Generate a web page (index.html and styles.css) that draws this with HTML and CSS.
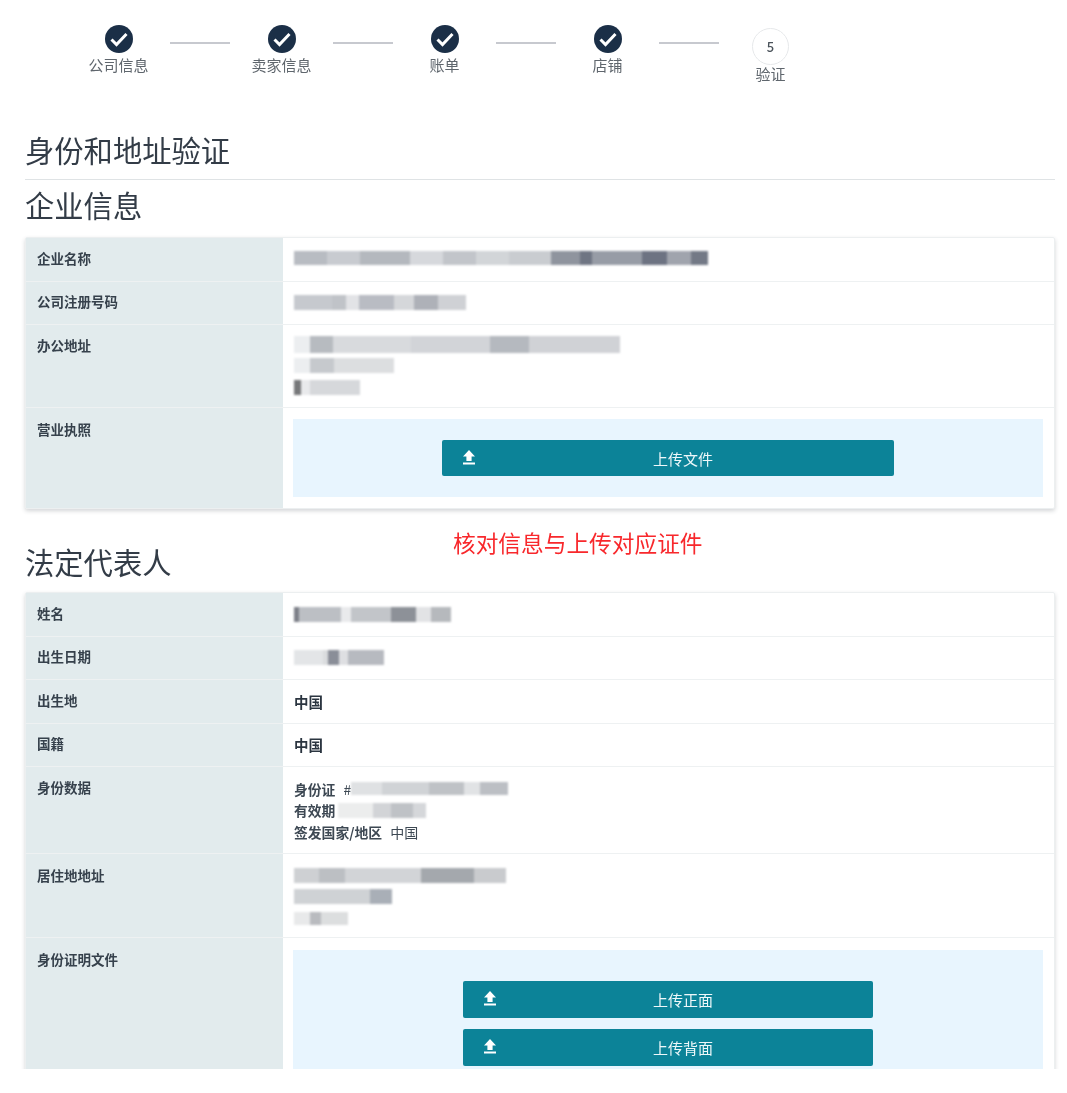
FILE: index.html
```html
<!DOCTYPE html>
<html lang="zh">
<head>
<meta charset="utf-8">
<title>身份和地址验证</title>
<link rel="stylesheet" href="styles.css">
</head>
<body>
<div class="viewport">
  <ol class="steps">
    <li class="step"><svg class="check" viewBox="0 0 28 28"><circle cx="14" cy="14" r="14" fill="#1b2f47"/><path d="M6.500 14.500l5 5 10-10.500" fill="none" stroke="#fff" stroke-width="3"/></svg><span>公司信息</span></li>
    <li class="line"></li>
    <li class="step"><svg class="check" viewBox="0 0 28 28"><circle cx="14" cy="14" r="14" fill="#1b2f47"/><path d="M6.500 14.500l5 5 10-10.500" fill="none" stroke="#fff" stroke-width="3"/></svg><span>卖家信息</span></li>
    <li class="line"></li>
    <li class="step"><svg class="check" viewBox="0 0 28 28"><circle cx="14" cy="14" r="14" fill="#1b2f47"/><path d="M6.500 14.500l5 5 10-10.500" fill="none" stroke="#fff" stroke-width="3"/></svg><span>账单</span></li>
    <li class="line"></li>
    <li class="step"><svg class="check" viewBox="0 0 28 28"><circle cx="14" cy="14" r="14" fill="#1b2f47"/><path d="M6.500 14.500l5 5 10-10.500" fill="none" stroke="#fff" stroke-width="3"/></svg><span>店铺</span></li>
    <li class="line"></li>
    <li class="step current"><b class="num">5</b><span>验证</span></li>
  </ol>

  <main class="content">
    <h1 class="title">身份和地址验证</h1>
    <h2 class="section first">企业信息</h2>
    <section class="card">
      <div class="row"><div class="label">企业名称</div><div class="value"><span class="mask r1"></span></div></div>
      <div class="row"><div class="label">公司注册号码</div><div class="value"><span class="mask r2"></span></div></div>
      <div class="row"><div class="label">办公地址</div><div class="value multi"><p><span class="mask r3"></span></p><p><span class="mask r4"></span></p><p><span class="mask r5"></span></p></div></div>
      <div class="row"><div class="label upload-label">营业执照</div><div class="value upload">
        <div class="panel single"><button class="btn wide"><svg class="up" viewBox="0 0 14 16"><path d="M7 1l6 6.500H9.600V12H4.400V7.500H1zM1 13.600h12V15.600H1z" fill="#fff"/></svg><span>上传文件</span></button></div>
      </div></div>
    </section>

    <p class="note">核对信息与上传对应证件</p>

    <h2 class="section second">法定代表人</h2>
    <section class="card clipped">
      <div class="row"><div class="label">姓名</div><div class="value"><span class="mask r6"></span></div></div>
      <div class="row"><div class="label">出生日期</div><div class="value"><span class="mask r7"></span></div></div>
      <div class="row"><div class="label">出生地</div><div class="value"><strong>中国</strong></div></div>
      <div class="row"><div class="label">国籍</div><div class="value"><strong>中国</strong></div></div>
      <div class="row"><div class="label">身份数据</div><div class="value multi identity"><p><strong>身份证</strong> # <span class="mask r8"></span></p><p><strong>有效期</strong> <span class="mask r9"></span></p><p><strong>签发国家/地区</strong> 中国</p></div></div>
      <div class="row"><div class="label lower">居住地地址</div><div class="value multi residence"><p><span class="mask r10"></span></p><p><span class="mask r11"></span></p><p><span class="mask r12"></span></p></div></div>
      <div class="row"><div class="label upload-label">身份证明文件</div><div class="value upload">
        <div class="panel double">
          <button class="btn narrow"><svg class="up" viewBox="0 0 14 16"><path d="M7 1l6 6.500H9.600V12H4.400V7.500H1zM1 13.600h12V15.600H1z" fill="#fff"/></svg><span>上传正面</span></button>
          <button class="btn narrow"><svg class="up" viewBox="0 0 14 16"><path d="M7 1l6 6.500H9.600V12H4.400V7.500H1zM1 13.600h12V15.600H1z" fill="#fff"/></svg><span>上传背面</span></button>
        </div>
      </div></div>
    </section>
  </main>
</div>
</body>
</html>
```

FILE: styles.css
```css
* { box-sizing: border-box; }
html, body { margin: 0; padding: 0; background: #fff; }
body { font-family: "Noto Sans CJK SC", "Liberation Sans", sans-serif; color: #2f3a46; height: 1093px; overflow: hidden; }
.viewport { height: 1069px; overflow: hidden; position: relative; filter: blur(.35px); }

.steps { list-style: none; margin: 0; padding: 25px 0 0 67px; display: flex; align-items: flex-start; height: 129px; }
.step { width: 103px; display: flex; flex-direction: column; align-items: center; font-size: 15px; line-height: 18px; color: #5f666d; }
.check { width: 28px; height: 28px; display: block; margin-bottom: 3px; }
.line { width: 60px; height: 2px; background: #c7c9cf; margin-top: 17px; }
.num { width: 37px; height: 37px; margin-top: 3px; border: 1px solid #e6e8ea; border-radius: 50%; display: flex; align-items: center; justify-content: center; font-size: 13px; font-weight: 500; color: #4a525a; }

.content { padding: 0 12px 0 25px; }
.title { margin: 0; height: 51px; font-size: 29.300px; line-height: 40px; font-weight: 400; border-bottom: 1px solid #dfe3e5; color: #333c47; }
.section { margin: 0; font-size: 29.300px; font-weight: 400; color: #333c47; }
.section.first { height: 57px; line-height: 48px; }
.section.second { height: 48px; margin-top: 35px; line-height: 34px; }

.card { background: #fff; border: 1px solid #eceff0; border-radius: 2px; box-shadow: 0 2px 4px rgba(40, 50, 60, .2); }
.row { display: flex; border-bottom: 1px solid #eef1f2; }
.row:last-child { border-bottom: 0; }
.label { width: 257px; flex: none; background: #e2ebed; padding: 8.500px 0 0 11px; font-size: 13.500px; line-height: 22px; font-weight: 700; color: #36414c; }
.label.upload-label { padding-top: 10px; }
.label.lower { padding-top: 10px; }
.value { flex: 1; min-width: 0; padding: 10.250px 11px; font-size: 14px; line-height: 22px; color: #3d4853; }
.value.multi { padding: 8.500px 11px 8.700px; }
.value.multi.identity { padding: 10.500px 11px 10px; }
.value.multi.residence { padding: 10.500px 11px 8.200px; }
.value.multi p { margin: 0; height: 21.600px; display: flex; align-items: center; gap: 5px; white-space: pre; }
.value.upload { padding: 11.500px 11px 11px 10px; }
.value strong { font-weight: 700; color: #2b3540; font-size: 14.500px; }
.value.multi strong { font-size: 13.800px; color: #3d4853; }

.panel { background: #e8f5fe; display: flex; flex-direction: column; align-items: center; }
.panel.single { height: 78px; padding-top: 21px; }
.panel.double { height: 140px; padding-top: 31px; gap: 11px; }

.btn { position: relative; display: flex; align-items: center; justify-content: center; border: 0; border-radius: 2px; background: #0c8398; color: #eef8fa; font-family: inherit; font-size: 15px; padding: 0; flex: none; }
.btn.wide { width: 452px; height: 36px; }
.btn.narrow { width: 410px; height: 37px; }
.btn.wide span { transform: translateX(15px); }
.btn.narrow span { transform: translateX(15px); }
.up { position: absolute; left: 20px; top: 50%; width: 14px; height: 16px; margin-top: -9px; }

.note { position: absolute; left: 453px; top: 527px; margin: 0; font-size: 22.700px; line-height: 32px; color: #f8282c; white-space: nowrap; }

.mask { display: inline-block; height: 15px; margin-top: 3px; vertical-align: top; filter: blur(1.2px); }
.multi .mask { margin-top: 0; }
.r1 { width: 414px; height: 14px; background: linear-gradient(90deg, #b8bcc2 0 8%, #c8cbd0 8% 16%, #b4b8be 16% 28%, #d6d8dc 28% 36%, #c2c5ca 36% 44%, #d2d5d8 44% 52%, #c9ccd0 52% 62%, #8f949e 62% 69%, #6f7583 69% 72%, #979ca6 72% 84%, #6d7382 84% 90%, #a0a4ad 90% 96%, #737986 96% 100%); }
.r2 { width: 172px; background: linear-gradient(90deg, #c6c9ce 0 22%, #c0c3c8 22% 30%, #e2e3e6 30% 38%, #b9bcc3 38% 58%, #d5d7da 58% 70%, #aeb1b8 70% 84%, #cfd1d5 84% 100%); }
.r3 { width: 326px; height: 17px; background: linear-gradient(90deg, #eceef0 0 5%, #b7bbc0 5% 12%, #d8dadd 12% 36%, #d2d4d8 36% 60%, #b5b9bf 60% 72%, #d0d2d6 72% 100%); }
.r4 { width: 100px; background: linear-gradient(90deg, #eceef0 0 16%, #c6c9cd 16% 40%, #dcdee0 40% 100%); }
.r5 { width: 66px; background: linear-gradient(90deg, #77787a 0 10%, #e9eaec 10% 24%, #d6d8db 24% 100%); }
.r6 { width: 157px; background: linear-gradient(90deg, #7d8088 0 3%, #bcbfc4 3% 30%, #e9eaec 30% 36%, #c2c5c9 36% 62%, #8d9198 62% 78%, #e2e3e5 78% 87%, #b6b9bd 87% 100%); }
.r7 { width: 90px; background: linear-gradient(90deg, #e3e5e7 0 32%, #dadcde 32% 38%, #8a8e98 38% 50%, #dedfe2 50% 60%, #b7bac0 60% 100%); }
.r8 { width: 157px; height: 13px; background: linear-gradient(90deg, #dfe1e3 0 20%, #d0d3d6 20% 50%, #bfc2c6 50% 72%, #e1e3e5 72% 82%, #bcbfc4 82% 100%); margin-left: -8px; }
.r9 { width: 88px; background: linear-gradient(90deg, #eceded 0 40%, #d2d4d7 40% 60%, #bfc2c6 60% 85%, #d5d7da 85% 100%); margin-left: -2px; }
.r10 { width: 212px; background: linear-gradient(90deg, #ced0d3 0 12%, #bcbfc3 12% 24%, #d2d4d7 24% 60%, #a4a8ad 60% 85%, #c9cbce 85% 100%); }
.r11 { width: 98px; background: linear-gradient(90deg, #cfd2d5 0 78%, #a9afb7 78% 100%); }
.r12 { width: 54px; height: 13px; background: linear-gradient(90deg, #e8e9ea 0 30%, #b9bbbf 30% 50%, #dcdedf 50% 100%); }
```
